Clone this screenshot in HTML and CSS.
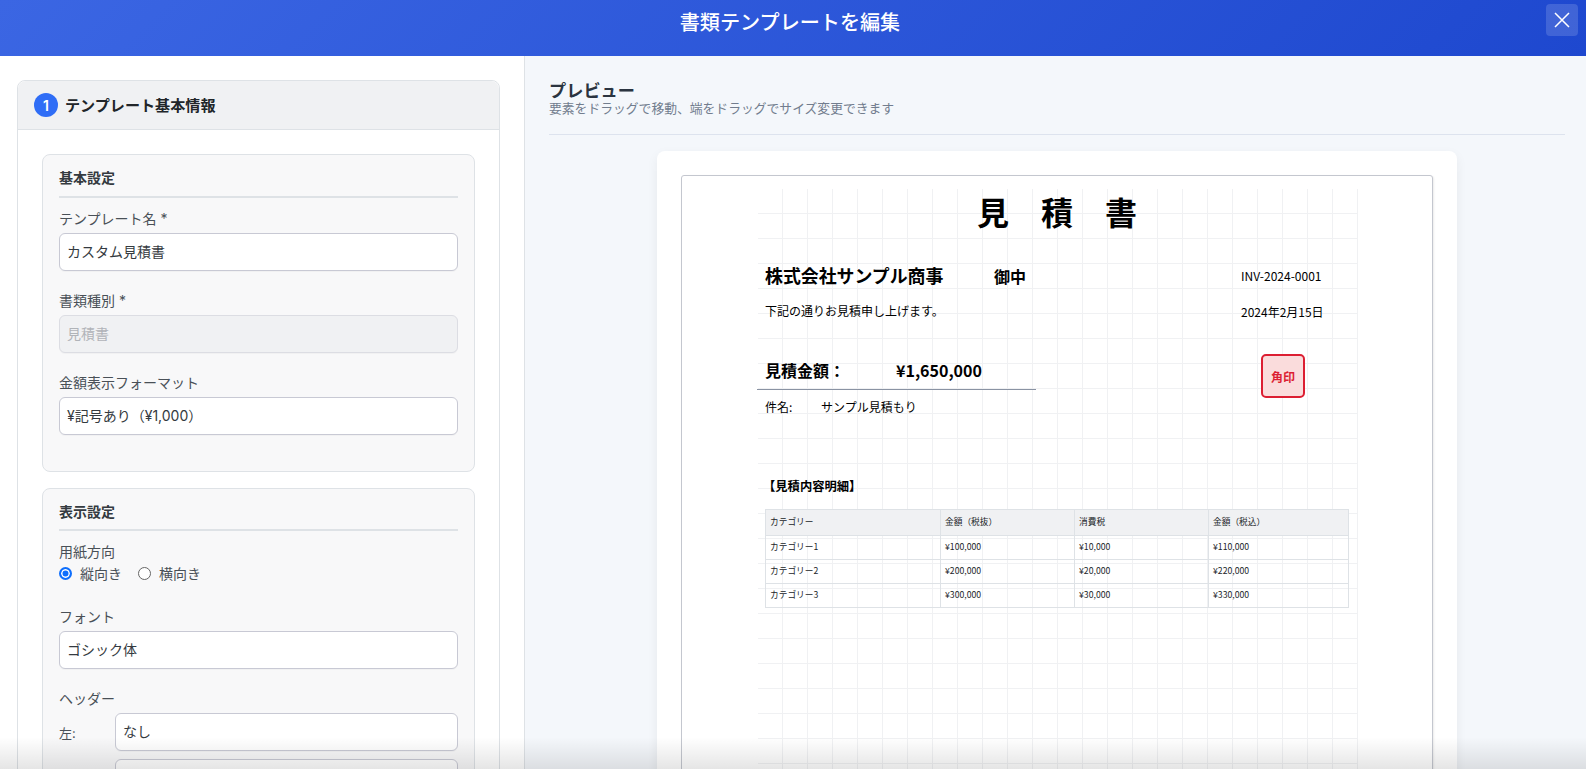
FILE: index.html
```html
<!DOCTYPE html>
<html lang="ja">
<head>
<meta charset="utf-8">
<title>書類テンプレートを編集</title>
<link rel="stylesheet" href="styles.css">
</head>
<body>
<div class="modal">
  <header class="modal-head">
    <h1>書類テンプレートを編集</h1>
    <button class="close" aria-label="閉じる">
      <svg viewBox="0 0 16 16" width="16" height="16"><path d="M1 1L15 15M15 1L1 15" stroke="#fff" stroke-width="1.5" fill="none"/></svg>
    </button>
  </header>
  <div class="modal-body">
    <aside class="left">
      <section class="card">
        <div class="card-head"><span class="step">1</span><span class="card-title">テンプレート基本情報</span></div>
        <div class="card-body">
          <div class="group">
            <h2>基本設定</h2>
            <div class="field">
              <label>テンプレート名 *</label>
              <div class="input">カスタム見積書</div>
            </div>
            <div class="field">
              <label>書類種別 *</label>
              <div class="input disabled">見積書</div>
            </div>
            <div class="field">
              <label>金額表示フォーマット</label>
              <div class="input">¥記号あり（¥1,000）</div>
            </div>
          </div>
          <div class="group second">
            <h2>表示設定</h2>
            <div class="field radio-field">
              <label class="tight">用紙方向</label>
              <div class="radios">
                <span class="radio"><i class="dot on"></i>縦向き</span>
                <span class="radio"><i class="dot"></i>横向き</span>
              </div>
            </div>
            <div class="field">
              <label>フォント</label>
              <div class="input">ゴシック体</div>
            </div>
            <div class="field">
              <label>ヘッダー</label>
              <div class="hrow"><span>左:</span><div class="input">なし</div></div>
              <div class="hrow"><span></span><div class="input"></div></div>
            </div>
          </div>
        </div>
      </section>
    </aside>
    <main class="right">
      <div class="prev-head">
        <h2>プレビュー</h2>
        <p>要素をドラッグで移動、端をドラッグでサイズ変更できます</p>
      </div>
      <div class="sheet">
        <div class="paper">
          <div class="canvas">
            <div class="el title">見　積　書</div>
            <div class="el client">株式会社サンプル商事</div>
            <div class="el gochu">御中</div>
            <div class="el num">INV-2024-0001</div>
            <div class="el intro">下記の通りお見積申し上げます。</div>
            <div class="el date">2024年2月15日</div>
            <div class="el total"><span>見積金額：</span><span>¥1,650,000</span></div>
            <div class="el stamp">角印</div>
            <div class="el subject"><span>件名:</span><span>サンプル見積もり</span></div>
            <div class="el detail">【見積内容明細】</div>
            <table class="el items">
              <colgroup><col class="c1"><col class="c2"><col class="c3"><col class="c4"></colgroup>
              <thead><tr><th>カテゴリー</th><th>金額（税抜）</th><th>消費税</th><th>金額（税込）</th></tr></thead>
              <tbody>
                <tr><td>カテゴリー1</td><td>¥100,000</td><td>¥10,000</td><td>¥110,000</td></tr>
                <tr><td>カテゴリー2</td><td>¥200,000</td><td>¥20,000</td><td>¥220,000</td></tr>
                <tr><td>カテゴリー3</td><td>¥300,000</td><td>¥30,000</td><td>¥330,000</td></tr>
              </tbody>
            </table>
          </div>
        </div>
      </div>
    </main>
  </div>
  <div class="fade"></div>
</div>
</body>
</html>
```

FILE: styles.css
```css
* { box-sizing: border-box; }
html, body { margin: 0; height: 100%; overflow: hidden; }
body { font-family: "Inter", "Noto Sans CJK JP", sans-serif; color: #212529; background: #fff; }
.modal { position: relative; width: 100%; height: 769px; display: flex; flex-direction: column; overflow: hidden; }
.modal-head { height: 56px; flex: none; display: flex; align-items: center; justify-content: center; position: relative; padding: 0 6px 14px 0; background: linear-gradient(135deg, #3b66e3 0%, #1e48cf 100%); color: #fff; }
.modal-head h1 { margin: 0; font-size: 20.1px; font-weight: 500; }
.close { position: absolute; right: 8px; top: 4px; width: 32px; height: 32px; padding: 0; border: 0; border-radius: 4px; background: rgba(255,255,255,.15); display: flex; align-items: center; justify-content: center; }
.modal-body { flex: 1; display: flex; min-height: 0; }
.left { width: 525px; flex: none; padding: 24px 24px 0 17px; background: #fff; border-right: 1px solid #dee2e6; overflow: hidden; }
.card { width: 483px; border: 1px solid #dee2e6; border-radius: 8px; background: #fff; }
.card-head { height: 49px; display: flex; align-items: center; gap: 8px; padding: 0 16px; background: #f0f1f3; border-bottom: 1px solid #dee2e6; border-radius: 8px 8px 0 0; font-size: 15.1px; font-weight: 700; color: #212529; }
.card-title { padding-bottom: 2px; margin-left: -1px; }
.step { width: 24px; height: 24px; border-radius: 50%; background: #2f6df6; color: #fff; display: flex; align-items: center; justify-content: center; font-size: 14px; font-weight: 600; }
.card-body { padding: 24px 24px 0; }
.group { background: #f8f8f9; border: 1px solid #dee2e6; border-radius: 8px; padding: 16px 16px 0; margin-bottom: 16px; height: 318px; }
.group.second { height: 400px; }
.group h2 { margin: 0 0 11px; padding-bottom: 8px; font-size: 14px; font-weight: 700; line-height: 13px; color: #343a40; border-bottom: 2px solid #dee2e6; height: 27px; }
.group.second h2 { height: 26px; margin-bottom: 11px; }
.field { margin-bottom: 20px; }
.radio-field { margin-bottom: 23px; }
label { display: block; font-size: 14px; line-height: 20px; color: #495057; margin-bottom: 4px; }
label.tight { margin-bottom: 0; }
.input { height: 38px; border: 1px solid #c8c9d4; border-radius: 6px; background: #fff; display: flex; align-items: center; padding: 0 7px 2px; font-size: 14px; color: #343a40; box-shadow: 0 1px 1px rgba(0,0,0,.03); }
.input.disabled { background: #f0f1f3; color: #b0b3b8; border-color: #dcdde3; }
.radios { display: flex; gap: 16px; height: 22px; align-items: center; font-size: 14px; color: #495057; }
.radio { display: flex; align-items: center; gap: 8px; }
.dot { width: 13px; height: 13px; border-radius: 50%; border: 1px solid #666; background: #fff; display: block; }
.dot.on { border: 2px solid #0d6efd; background: #0d6efd; box-shadow: inset 0 0 0 1.5px #fff; }
.hrow { display: flex; align-items: center; margin-bottom: 8px; font-size: 13px; color: #495057; }
.hrow span { width: 56px; flex: none; }
.hrow .input { flex: 1; }
.right { flex: 1; background: #f4f7fb; padding: 25px 21px 0 24px; min-width: 0; overflow: hidden; display: flex; flex-direction: column; }
.prev-head { border-bottom: 1px solid #dde3ee; height: 54px; flex: none; }
.prev-head h2 { margin: 0; font-size: 17.2px; line-height: 20px; font-weight: 700; color: #2b3440; }
.prev-head p { margin: 0; font-size: 12.8px; line-height: 16px; color: #727d8e; }
.sheet { width: 800px; margin: 16px auto 0; flex: none; padding: 24px; background: #fff; border-radius: 8px; box-shadow: 0 4px 12px rgba(0,0,0,.06); height: 700px; }
.paper { width: 752px; height: 700px; border: 1px solid #c4c7cf; border-radius: 3px; padding: 12px 75px 0; background: #fff; box-shadow: 1px 1px 2px rgba(0,0,0,.08); }
.canvas { position: relative; width: 600px; height: 800px; color: #000; font-family: "Noto Sans CJK JP", sans-serif; }
.canvas::before {
  content: ""; position: absolute; left: 1px; top: 1px; width: 600px; height: 800px;
  background-image: linear-gradient(to right, transparent 24px, #f0f1f3 24px), linear-gradient(to bottom, transparent 24px, #f0f1f3 24px);
  background-size: 25px 25px;
}
.el { position: absolute; white-space: nowrap; }
.title { left: 0; width: 600px; text-align: center; top: 0; font-size: 32px; font-weight: 700; line-height: 46px; }
.client { left: 8px; top: 75px; font-size: 17.9px; font-weight: 700; line-height: 24px; }
.gochu { left: 237px; top: 78px; font-size: 16px; font-weight: 700; line-height: 20px; }
.num { left: 484px; top: 79px; font-size: 12px; line-height: 18px; }
.intro { left: 8px; top: 114px; font-size: 12px; line-height: 18px; }
.date { left: 484px; top: 115px; font-size: 12px; line-height: 18px; }
.total { left: 0; top: 170px; width: 279px; height: 32px; padding-left: 8px; border-bottom: 1px solid #8a93a3; font-size: 16px; font-weight: 700; line-height: 24px; display: flex; }
.total span:first-child { width: 131px; }
.stamp { left: 504px; top: 166px; width: 44px; height: 44px; border: 2px solid #dc1e32; border-radius: 5px; background: #fadcdc; color: #dc1e32; font-size: 12px; font-weight: 700; display: flex; align-items: center; justify-content: center; }
.subject { left: 8px; top: 210px; font-size: 12px; line-height: 18px; display: flex; }
.subject span:first-child { width: 56px; }
.detail { left: 6px; top: 289px; font-size: 12.3px; font-weight: 700; line-height: 18px; }
.items { left: 8px; top: 321px; width: 584px; border-collapse: collapse; table-layout: fixed; font-size: 8.7px; line-height: 1; color: #212529; }
.items th, .items td { border: 1px solid #dee2e6; padding: 0 4px; text-align: left; font-weight: 400; height: 24px; }
.items th { background: #f0f1f3; height: 26px; }
.c1 { width: 175px; } .c2 { width: 134px; } .c3 { width: 134px; }
.fade { position: absolute; left: 0; right: 0; bottom: 0; height: 32px; background: linear-gradient(to bottom, rgba(0,0,0,0), rgba(0,0,0,.1)); pointer-events: none; }
```
